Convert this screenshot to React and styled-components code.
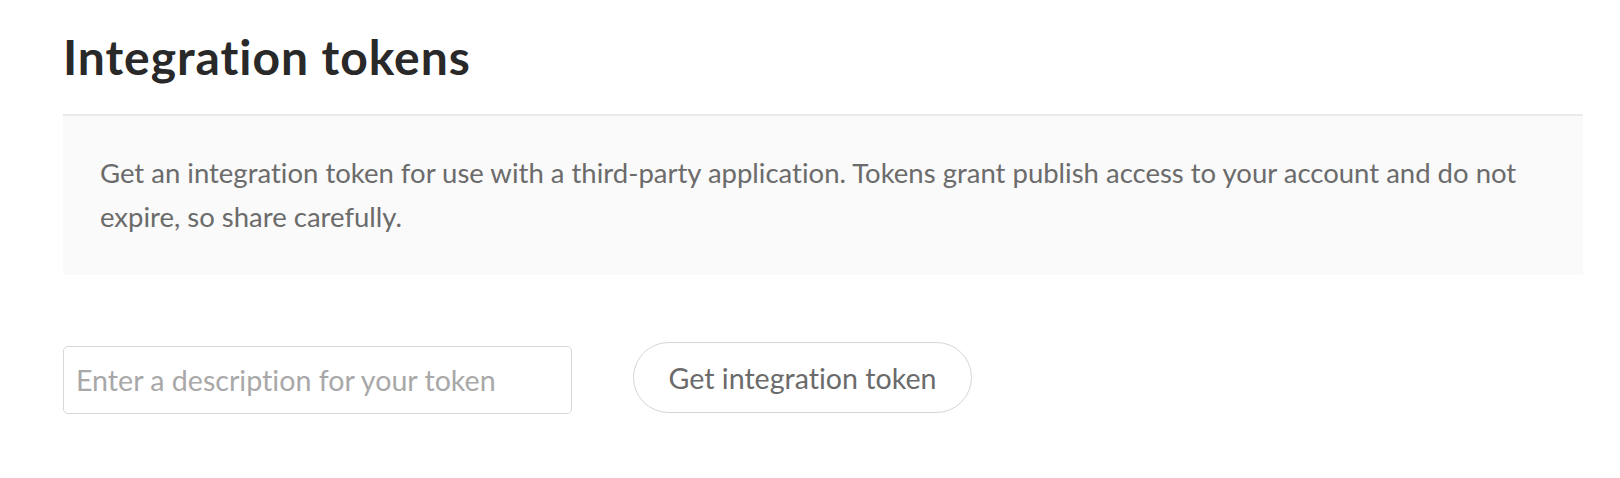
import React from 'react';
import styled, { createGlobalStyle } from 'styled-components';

const GlobalStyle = createGlobalStyle`
  body {
    margin: 0;
    background: #ffffff;
    font-family: Lato, "Noto Sans", sans-serif;
    font-variant-ligatures: none;
  }
`

const Page = styled.div`
  padding: 28px 37px 0 63px;
`

const Title = styled.h2`
  margin: 0 0 29px;
  font-size: 48px;
  line-height: 57px;
  font-weight: 700;
  letter-spacing: 0.95px;
  color: #292929;
`

const InfoBox = styled.div`
  border-top: 2px solid #ebebeb;
  background-color: #fafafa;
  padding: 35px 37px 37px;
`

const InfoText = styled.p`
  margin: 0;
  font-size: 27.5px;
  line-height: 43.5px;
  color: #6b6b6b;
`

const FormRow = styled.div`
  display: flex;
  flex-direction: row;
  align-items: flex-start;
  gap: 61px;
  margin-top: 67px;
`

const TokenInput = styled.input`
  box-sizing: border-box;
  width: 509px;
  height: 68px;
  margin-top: 4px;
  padding: 0 12px;
  border: 1.5px solid #d8d8d8;
  border-radius: 5px;
  font-family: Lato, "Noto Sans", sans-serif;
  font-variant-ligatures: none;
  font-size: 28.6px;
  color: #333;
  caret-color: #222;
  outline: none;

  &::placeholder {
    color: #a8a8a8;
  }
`

const TokenButton = styled.button`
  box-sizing: border-box;
  width: 339px;
  height: 71px;
  border: 1.5px solid #d6d6d6;
  border-radius: 36px;
  background: #fff;
  font-family: Lato, "Noto Sans", sans-serif;
  font-variant-ligatures: none;
  font-size: 28.6px;
  color: #6b6b6b;
  cursor: pointer;
`

const App = () => {
  return (
    <Page>
      <GlobalStyle />
      <Title>Integration tokens</Title>
      <InfoBox>
        <InfoText>
          Get an integration token for use with a third-party application. Tokens grant publish access to your account and do not expire, so share carefully.
        </InfoText>
      </InfoBox>
      <FormRow>
        <TokenInput type="text" placeholder="Enter a description for your token" autoFocus />
        <TokenButton type="button">Get integration token</TokenButton>
      </FormRow>
    </Page>
  )
}

export default App;
